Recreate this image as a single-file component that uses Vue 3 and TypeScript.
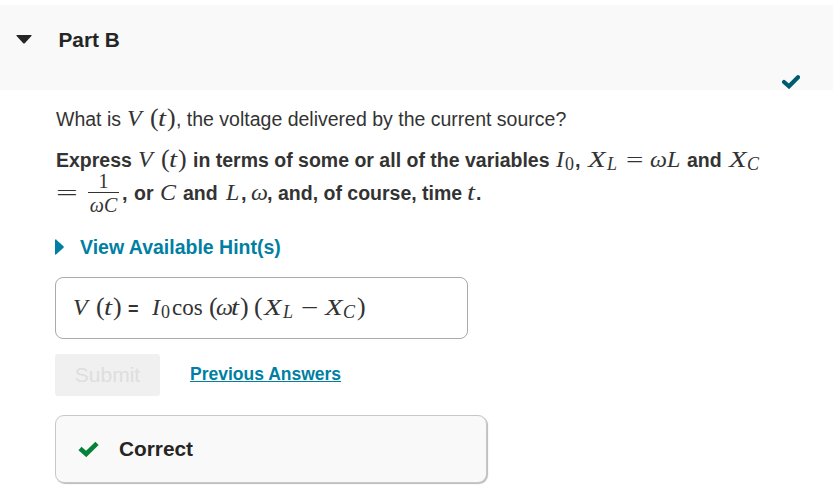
<script setup lang="ts">
type Kind = 'text' | 'bold' | 'var' | 'sub' | 'subvar' | 'num' | 'paren' | 'rel' | 'longrel' | 'comma' | 'eq' | 'frac'
type Piece = [text: string, start: number, kind: Kind]

interface Cell {
  text: string
  kind: Kind
  width: number
  wide: boolean
}

// Each piece carries its pen position; a cell spans to the start of the next one.
function typeset(pieces: Piece[], end: number): Cell[] {
  return pieces.map(([text, start, kind], i) => ({
    text,
    kind,
    width: (i + 1 < pieces.length ? pieces[i + 1][1] : end) - start,
    wide: kind === 'var' && (text === 'X' || text === 't'),
  }))
}

const rows = [
  {
    name: 'question',
    cells: typeset([
      ['What is', 56, 'text'], ['V', 127, 'var'], ['(', 150, 'paren'], ['t', 158, 'var'], [')', 167, 'paren'],
      [', the voltage delivered by the current source?', 176, 'text'],
    ], 600),
  },
  {
    name: 'express',
    cells: typeset([
      ['Express', 56, 'bold'], ['V', 138, 'var'], ['(', 161, 'paren'], ['t', 169, 'var'], [')', 178, 'paren'],
      ['in terms of some or all of the variables', 193, 'bold'],
      ['I', 556, 'var'], ['0', 565, 'sub'], [',', 575, 'comma'], ['X', 588, 'var'], ['L', 607, 'subvar'],
      ['=', 626, 'rel'], ['ω', 650, 'var'], ['L', 667, 'var'], ['and', 687, 'bold'],
      ['X', 729, 'var'], ['C', 747, 'subvar'],
    ], 780),
  },
  {
    name: 'continued',
    cells: typeset([
      ['=', 56, 'longrel'], ['', 88, 'frac'], [',', 122, 'comma'], ['or', 134, 'bold'], ['C', 160, 'var'],
      ['and', 183, 'bold'], ['L', 226, 'var'], [',', 241, 'comma'], ['ω', 251, 'var'], [',', 267, 'comma'],
      ['and, of course, time', 278, 'bold'], ['t', 467, 'var'], ['.', 476, 'bold'],
    ], 500),
  },
]

const answer = typeset([
  ['V', 74, 'var'], ['(', 97, 'paren'], ['t', 105, 'var'], [')', 114, 'paren'], ['=', 129, 'eq'],
  ['I', 153, 'var'], ['0', 162, 'sub'], ['cos', 173, 'num'], ['(', 210, 'paren'], ['ω', 217, 'var'],
  ['t', 232, 'var'], [')', 241, 'paren'], ['(', 255, 'paren'], ['X', 265, 'var'], ['L', 284, 'subvar'],
  ['−', 302, 'rel'], ['X', 326, 'var'], ['C', 344, 'subvar'], [')', 358, 'paren'],
], 380)
</script>

<template>
  <main class="page">
    <header class="part-header">
      <svg class="caret" width="16" height="9" viewBox="0 0 16 9"><path d="M.8 0H15.2Q16 .3 15.4 1L9 8Q8 9 7 8L.6 1Q0 .3.8 0Z" fill="#252525" /></svg>
      <h2 class="part-title">Part B</h2>
      <svg class="done" width="18" height="14" viewBox="0 0 18 14"><path d="M2 7L7 11.3L16 2.3" fill="none" stroke="#005a70" stroke-width="4.2" stroke-linejoin="miter" stroke-linecap="round" /></svg>
    </header>

    <section class="body">
      <p v-for="row in rows" :key="row.name" class="line" :class="row.name">
        <span v-for="(cell, i) in row.cells" :key="i" class="cell" :class="[cell.kind, { wide: cell.wide }]" :style="{ width: cell.width + 'px' }">
          <template v-if="cell.kind === 'frac'"><span class="numerator">1</span><span class="denominator">ωC</span></template>
          <template v-else>{{ cell.text }}</template>
        </span>
      </p>

      <a class="hints">
        <svg width="9" height="16" viewBox="0 0 9 16"><path d="M0 .8Q.2 0 1 .5L8.5 7.2Q9 8 8.5 8.7L1 15.5Q.2 16 0 15.2Z" fill="#007fa3" /></svg>
        <span>View Available Hint(s)</span>
      </a>

      <div class="answer">
        <div class="line">
          <span v-for="(cell, i) in answer" :key="i" class="cell" :class="[cell.kind, { wide: cell.wide }]" :style="{ width: cell.width + 'px' }">{{ cell.text }}</span>
        </div>
      </div>

      <div class="actions">
        <button class="submit" disabled>Submit</button>
        <a class="previous">Previous Answers</a>
      </div>

      <div class="feedback">
        <svg width="21" height="16" viewBox="0 0 21 16"><path d="M2 7.5L8.2 13L19 2.4" fill="none" stroke="#038238" stroke-width="4.6" /></svg>
        <strong>Correct</strong>
      </div>
    </section>
  </main>
</template>

<style>
body {
  margin: 0;
  background: #fff;
}
</style>

<style scoped>
.page {
  box-sizing: border-box;
  width: 836px;
  height: 503px;
  padding-top: 5px;
  overflow: hidden;
  font-family: "Liberation Sans", Arial, sans-serif;
  color: #333;
}
.part-header {
  box-sizing: border-box;
  display: flex;
  align-items: flex-start;
  width: 833px;
  height: 85px;
  padding-left: 16px;
  background: #f9f9f9;
}
.caret {
  margin-top: 30px;
}
.part-title {
  margin: 23px 0 0 26.5px;
  font-size: 20.8px;
  line-height: 24px;
  color: #252525;
}
.done {
  margin: 70px 33px 0 auto;
}
.body {
  padding-left: 55px;
}
.line {
  display: flex;
  align-items: baseline;
  margin: 0 0 0 1px;
  height: 32px;
}
.question {
  margin-top: 12px;
}
.express {
  margin-top: 9px;
}
.continued {
  margin-top: 1px;
}
.cell {
  flex: none;
  display: block;
  white-space: nowrap;
  line-height: 32px;
  font-size: 19.5px;
}
.bold {
  font-weight: 700;
}
.var,
.subvar,
.num,
.sub,
.paren,
.rel,
.longrel {
  font-family: "Liberation Serif", "Times New Roman", serif;
}
.var {
  font-size: 24px;
  font-style: italic;
}
.wide {
  transform: scaleX(1.2);
  transform-origin: left;
}
.num {
  font-size: 23px;
}
.sub,
.subvar {
  position: relative;
  top: 3px;
  font-size: 18px;
}
.subvar {
  font-style: italic;
}
.paren {
  font-size: 26px;
}
.rel,
.longrel {
  font-size: 22px;
  transform: scaleX(1.4);
  transform-origin: left;
}
.longrel {
  transform: scaleX(1.75);
}
.comma {
  font-size: 20px;
  font-weight: 700;
}
.eq {
  font-size: 18px;
  font-weight: 700;
}
.frac {
  position: relative;
  align-self: flex-start;
  height: 32px;
  font-family: "Liberation Serif", "Times New Roman", serif;
  font-size: 20px;
}
.numerator,
.denominator {
  position: absolute;
  left: 0;
  width: 31px;
  text-align: center;
  line-height: 22px;
}
.numerator {
  bottom: 15px;
  border-bottom: 1px solid #333;
}
.denominator {
  top: 18px;
  font-style: italic;
}
.hints {
  display: flex;
  align-items: center;
  gap: 16px;
  margin-top: 27px;
  height: 24px;
  font-size: 19.5px;
  font-weight: 700;
  color: #007fa3;
}
.answer {
  box-sizing: border-box;
  width: 413px;
  height: 62px;
  margin-top: 18px;
  padding: 13px 0 0 16px;
  border: 1px solid #aaa;
  border-radius: 8px;
}
.actions {
  display: flex;
  align-items: center;
  gap: 30px;
  margin-top: 15px;
}
.submit {
  width: 105px;
  height: 42px;
  padding: 0;
  border: 0;
  border-radius: 3px;
  background: #f0f0f0;
  font: 21px "Liberation Sans", Arial, sans-serif;
  color: #dedede;
}
.previous {
  position: relative;
  top: -1px;
  font-size: 17.5px;
  font-weight: 700;
  color: #007fa3;
  text-decoration: underline;
}
.feedback {
  box-sizing: border-box;
  display: flex;
  align-items: center;
  gap: 20px;
  width: 432px;
  height: 68px;
  margin-top: 19px;
  padding-left: 22px;
  border: 1px solid #c7c7c7;
  border-radius: 9px;
  background: #f9f9f9;
  box-shadow: 1px 1px 1px #bbb;
  font-size: 20.8px;
  color: #252525;
}
</style>
